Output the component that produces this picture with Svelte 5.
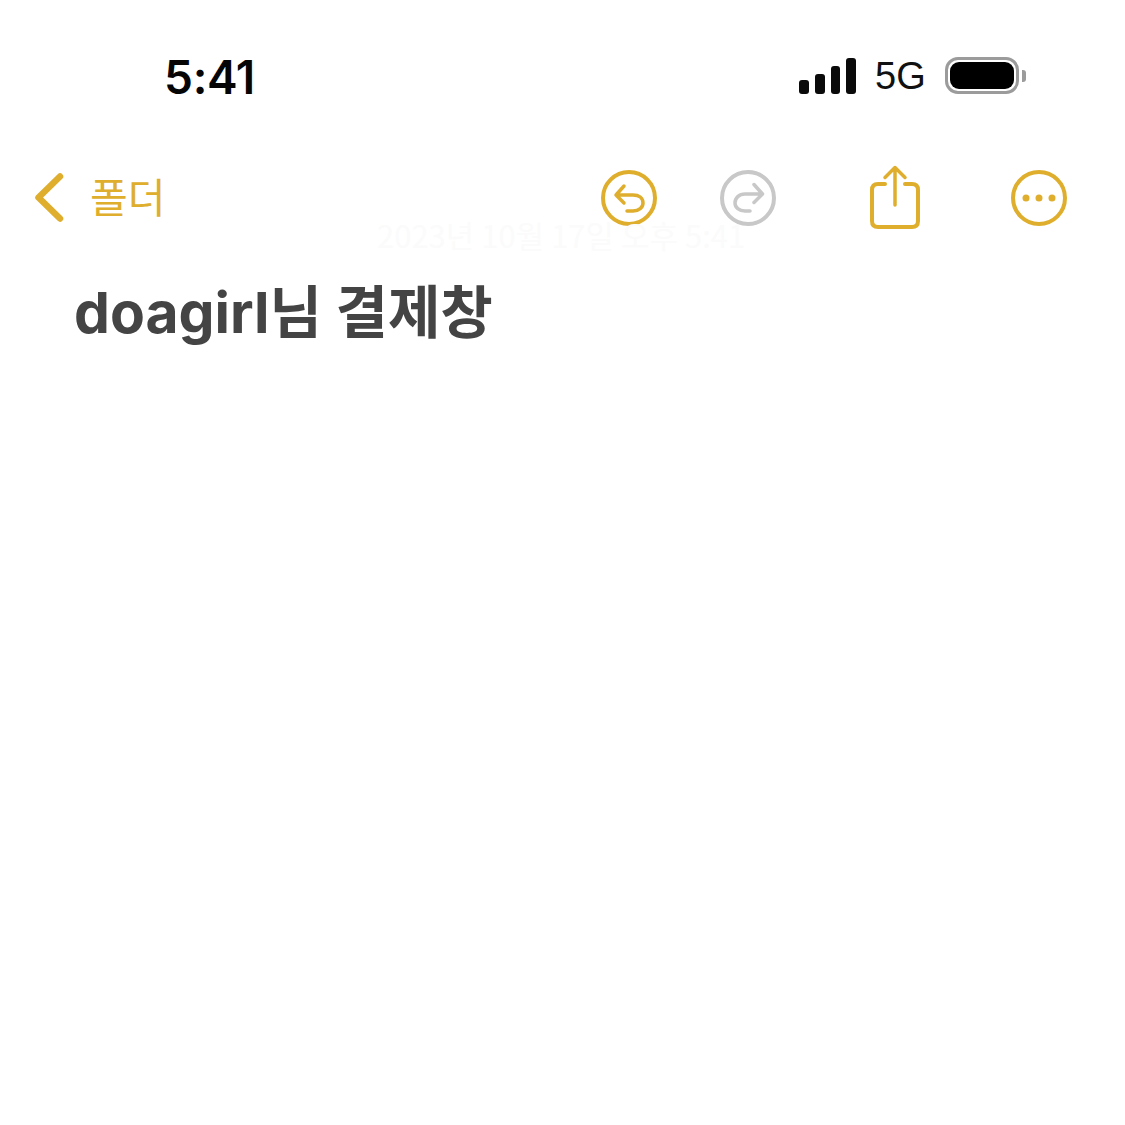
<script>
	const title = 'doagirl님 결제창';
	const folder = '폴더';
	const edited = '2023년 10월 17일 오후 5:41';
	const bars = [14, 20, 28, 36];
</script>

<div class="screen">
	<header class="status">
		<span class="time">5:41</span>
		<div class="signal">
			{#each bars as h}
				<span class="bar" style="height: {h}px"></span>
			{/each}
		</div>
		<span class="network">5G</span>
		<div class="battery"><span class="level"></span></div>
		<span class="nub"></span>
	</header>

	<nav class="nav">
		<svg class="back" width="30" height="50" viewBox="0 0 30 50" fill="none">
			<path d="M26 3.500 L4.500 24.500 L26 45.500" />
		</svg>
		<span class="folder">{folder}</span>
		<span class="edited">{edited}</span>

		<svg class="icon undo" width="58" height="58" viewBox="0 0 58 58" fill="none">
			<circle cx="29" cy="29" r="26" />
			<path class="thin" d="M27 42 H33 C39 42 43 38.500 43 34 C43 29 39 26 33 26 H16 M24 17 L16 26 L24 34" />
		</svg>
		<svg class="icon redo" width="58" height="58" viewBox="0 0 58 58" fill="none">
			<circle cx="29" cy="29" r="26" />
			<path class="thin" d="M31 42 H26 C20 42 16 38.500 16 34 C16 29 20 25 26 25 H43 M35 15.500 L43.500 25 L35 33.500" />
		</svg>
		<svg class="icon share" width="50" height="64" viewBox="0 0 50 64" fill="none">
			<path d="M15 19 H8 C4 19 2 21 2 25 V56 C2 60 4 62 8 62 H42 C46 62 48 60 48 56 V25 C48 21 46 19 42 19 H35" />
			<path class="thin" d="M25 40 V2.500 M15 12.500 L25 2.500 L35 12.500" />
		</svg>
		<svg class="icon more" width="58" height="58" viewBox="0 0 58 58" fill="none">
			<circle cx="29" cy="29" r="26" />
			<circle class="dot" cx="16" cy="29" r="3.500" />
			<circle class="dot" cx="29" cy="29" r="3.500" />
			<circle class="dot" cx="42" cy="29" r="3.500" />
		</svg>
	</nav>

	<h1 class="title">{title}</h1>
</div>

<style>
	:global(body) {
		margin: 0;
		background: #fff;
	}

	.screen {
		width: 1125px;
		height: 1125px;
		overflow: hidden;
		background: #fff;
		font-family: Inter, 'Noto Sans CJK KR', sans-serif;
	}

	.status {
		display: flex;
		align-items: center;
		height: 154px;
		padding-left: 164px;
		box-sizing: border-box;
	}
	.time {
		width: 635px;
		font-size: 46px;
		font-weight: 600;
		line-height: 1;
		color: #050505;
		letter-spacing: -0.3px;
	}
	.signal {
		display: flex;
		align-items: flex-end;
		gap: 6px;
		height: 36px;
		width: 57px;
		margin-top: -3px;
	}
	.bar {
		width: 10px;
		border-radius: 3px;
		background: #0a0a0a;
	}
	.network {
		margin-left: 19px;
		margin-top: -3px;
		width: 50px;
		font-family: 'Liberation Sans', sans-serif;
		font-size: 38px;
		font-weight: 400;
		color: #111;
		line-height: 1;
	}
	.battery {
		margin-left: 20px;
		margin-top: -3px;
		box-sizing: border-box;
		width: 74px;
		height: 37px;
		padding: 2px;
		border: 3px solid #9b9b9b;
		border-radius: 13px;
	}
	.level {
		display: block;
		height: 100%;
		border-radius: 9px;
		background: #000;
	}
	.nub {
		width: 4px;
		height: 12px;
		margin-left: 3px;
		margin-top: -3px;
		border-radius: 0 3px 3px 0;
		background: #9b9b9b;
	}

	.nav {
		position: relative;
		display: flex;
		align-items: center;
		height: 88px;
		padding-left: 34px;
	}
	.back path {
		stroke: #deae2c;
		stroke-width: 6.500px;
		stroke-linecap: round;
		stroke-linejoin: round;
	}
	.folder {
		margin-left: 26px;
		margin-top: -6px;
		width: 510px;
		font-family: 'Noto Sans CJK KR', sans-serif;
		font-size: 41px;
		font-weight: 400;
		letter-spacing: 0;
		color: #deae2c;
	}
	.edited {
		position: absolute;
		left: 377px;
		top: 58px;
		font-size: 31px;
		font-family: 'Noto Sans CJK KR', sans-serif;
		color: #fbfbfb;
		white-space: nowrap;
	}
	.icon {
		flex: none;
		stroke: #deae2c;
		stroke-width: 4px;
		stroke-linecap: round;
		stroke-linejoin: round;
	}
	.icon .thin {
		stroke-width: 3.500px;
	}
	.icon .dot {
		fill: #deae2c;
		stroke: none;
	}
	.redo {
		margin-left: 61px;
		stroke: #c8c8c8;
	}
	.share {
		margin-left: 92.500px;
		margin-top: -2px;
	}
	.more {
		margin-left: 90.500px;
	}

	.title {
		margin: 36px 0 0;
		padding-left: 74px;
		font-size: 57px;
		font-weight: 700;
		line-height: 70px;
		color: #444;
		letter-spacing: 0;
	}
</style>
